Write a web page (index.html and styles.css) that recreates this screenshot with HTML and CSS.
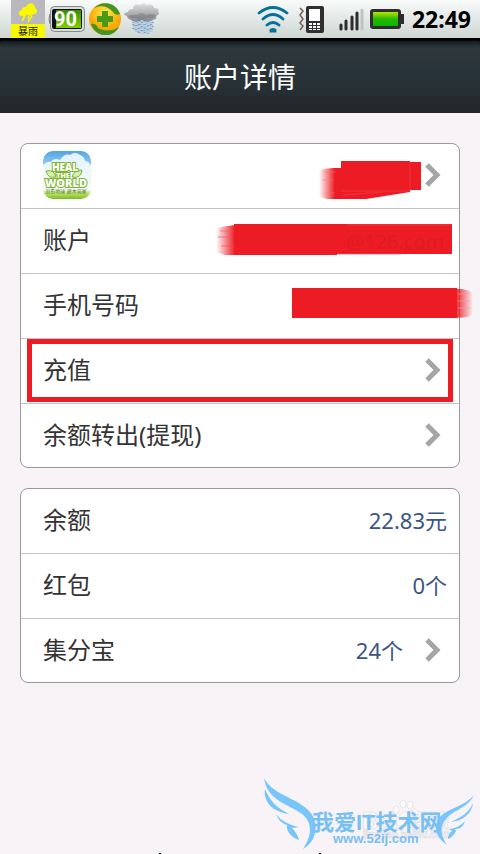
FILE: index.html
```html
<!DOCTYPE html>
<html lang="zh-CN">
<head>
    <meta charset="UTF-8">
    <meta name="viewport" content="width=device-width, initial-scale=1.0">
    <title>账户详情</title>
    <link rel="stylesheet" href="styles.css">
</head>
<body>
    <!-- Status bar -->
    <div class="status-bar">
        <div class="status-left">
            <div class="weather">
                <svg width="34" height="24" viewBox="0 0 34 24">
                    <path fill="#f8f800" d="M11 16c-5 0-4-6 0-6 0-3 2-3 4-3 2-5 9-5 9 1 3 1 3 6-1 6l-3 2-4-1-3 2z"/>
                    <path stroke="#f8f800" stroke-width="1.500" d="M14 16l-3 5M18 16l-1 3M21 16l-4 6"/>
                </svg>
                <span class="weather-text">暴雨</span>
            </div>
            <svg class="battery-level" width="38" height="28" viewBox="0 0 38 28">
                <defs>
                    <linearGradient id="green" x2="0" y2="1">
                        <stop offset="0" stop-color="#3c8a08"/><stop offset="1" stop-color="#80d000"/>
                    </linearGradient>
                </defs>
                <path d="M4 9H2q-2 5 0 10h2" fill="#ddd" stroke="#777"/>
                <rect x="2.500" y="1.500" width="34" height="25" rx="4" fill="#d9dcda" stroke="#858a88"/>
                <rect x="4" y="4" width="30" height="20" rx="2" fill="#111"/>
                <rect x="8" y="5" width="25" height="18" fill="url(#green)"/>
                <text x="6" y="21" class="level-text">90</text>
            </svg>
            <svg width="32" height="32" viewBox="0 0 32 32">
                <defs>
                    <radialGradient id="gold" cy=".3">
                        <stop offset="0" stop-color="#ffe94d"/><stop offset="1" stop-color="#f8a808"/>
                    </radialGradient>
                </defs>
                <circle cx="16" cy="16" r="16" fill="url(#gold)"/>
                <path fill="#429522" d="M5 5C13-3 27-1 31 11q-5 2-7-2C19 3 12 2 5 5zM2 21q5-1 7 4c5 3 13 4 21-1C24 36 7 35 2 21z"/>
                <path fill="#4a9a18" d="M13 8h6v5h5v6h-5v5h-6v-5H8v-6h5z"/>
            </svg>
            <svg width="36" height="34" viewBox="0 0 36 34">
                <defs>
                    <linearGradient id="cloud" x2="0" y2="1">
                        <stop offset="0" stop-color="#dedee2"/><stop offset="1" stop-color="#88888d"/>
                    </linearGradient>
                </defs>
                <path fill="#9bb9d3" opacity=".5" d="M7 17h22v12q-10 6-19 0z"/>
                <path fill="url(#cloud)" d="M3 14q-6-2 1-4 0-3 5-3 0-6 7-4 3-3 7 0 6-2 7 3 6 0 4 4 3 2-2 4 2 4-5 4-4 3-9 0-5 3-10 0-5-1-5-4z"/>
                <path fill="#6a6a70" opacity=".4" d="M4 14q6-2 9-1 5-4 9 0 5-2 10 0-3 4-8 3-8 3-13 0-4 1-7-2z"/>
                <path stroke="#3d84c4" stroke-width="1" stroke-dasharray="1 3" d="M9 18v11M12 19v11M15 18v13M18 20v12M21 18v14M24 19v13M27 18v11M29 20v6"/>
                <path stroke="#6fa3d2" stroke-width="1" stroke-dasharray="1 2" d="M10 20v9M14 20v11M17 19v12M20 19v12M23 18v12M26 20v9"/>
            </svg>
        </div>
        <div class="status-right">
            <svg class="wifi" width="32" height="27" viewBox="0 0 32 27" fill="none" stroke="#087199" stroke-width="2.800" stroke-linecap="round">
                <path d="M2 7Q16-4 30 7M6 13Q16 4 26 13M10 19q6-5 12 0M14 25v-1q2-1 4 0v1z"/>
            </svg>
            <svg class="vibrate" width="25" height="28" viewBox="0 0 25 28">
                <path d="M1 3l3 3-3 4 3 4-3 4 3 3-3 4" fill="none" stroke="#74625d" stroke-width="1.500"/>
                <rect x="7" y="1" width="18" height="27" rx="2" fill="#302e30"/>
                <path fill="#fff" d="M10 4h11v12H10zM10 18h3v2h-3zM14 18h3v2h-3zM18 18h3v2h-3zM10 21h3v2h-3zM14 21h3v2h-3zM18 21h3v2h-3zM10 24h3v1h-3zM14 24h3v1h-3zM18 24h3v1h-3z"/>
            </svg>
            <svg class="signal" width="26" height="23" viewBox="0 0 26 23" stroke-width="3" stroke-linecap="round">
                <path stroke="#302c2e" d="M3 17v4M8 13v8M14 9v12M19 5v16"/>
                <path stroke="#bfc3c1" d="M24 2v19"/>
            </svg>
            <svg width="34" height="20" viewBox="0 0 34 20">
                <defs>
                    <linearGradient id="charge" x2="0" y2="1">
                        <stop offset="0" stop-color="#b4e800"/><stop offset=".5" stop-color="#28b800"/><stop offset="1" stop-color="#05b800"/>
                    </linearGradient>
                </defs>
                <rect width="31" height="20" rx="3" fill="#302d31"/>
                <path fill="#302d31" d="M30 5h4v10h-4z"/>
                <rect x="3" y="3" width="25" height="14" fill="url(#charge)"/>
            </svg>
            <span class="time">22:49</span>
        </div>
    </div>

    <header class="header">
        <h1>账户详情</h1>
    </header>

    <main class="content">
        <!-- Account -->
        <div class="card">
            <a class="row" href="#">
                <svg class="avatar" width="48" height="48" viewBox="0 0 48 48">
                    <defs>
                        <linearGradient id="sky" x2="0" y2="1">
                            <stop offset="0" stop-color="#4fa5e2"/><stop offset=".5" stop-color="#c5e7f8"/><stop offset=".8" stop-color="#eef8d0"/><stop offset=".9" stop-color="#b5df5f"/><stop offset="1" stop-color="#78bb28"/>
                        </linearGradient>
                    </defs>
                    <rect width="48" height="48" rx="10" fill="url(#sky)"/>
                    <path fill="#f4fafd" d="M0 14q4-4 8-3 3-5 9-2 5-7 10-5 5-4 10 0 4 1 5 6 4 0 6 5v25H0z" opacity=".9"/>
                    <path fill="#d8efb2" stroke="#7ab52c" d="M3 20q8-2 10 6-8 2-10-6zM39 19q-8 0-10 7 9 2 10-7z"/>
                    <g class="avatar-text">
                        <text x="22" y="20" font-size="10">HEAL</text>
                        <text x="20" y="27" font-size="7">THE</text>
                        <text x="23" y="36" font-size="11">WORLD</text>
                    </g>
                    <text x="23" y="42" class="avatar-slogan">治愈地球 建木筑家</text>
                </svg>
                <svg class="arrow" width="16" height="24" viewBox="0 0 16 24"><path d="M2 2l10 10L2 22"/></svg>
                <svg class="redact redact-name" width="102" height="40" viewBox="0 0 102 40">
                    <defs>
                        <linearGradient id="fade-left">
                            <stop offset="0" stop-color="#ed1c24" stop-opacity="0"/><stop offset="1" stop-color="#ed1c24"/>
                        </linearGradient>
                        <linearGradient id="fade-right">
                            <stop offset="0" stop-color="#ed1c24"/><stop offset="1" stop-color="#ed1c24" stop-opacity="0"/>
                        </linearGradient>
                    </defs>
                    <path fill="url(#fade-left)" d="M0 11l4-2 10-1h2v31H8l-8-3z"/>
                    <path fill="#ed1c24" d="M15 8h7V1h69v1h11v28H91v2l-44 7H15z"/>
                    <path stroke="#f4747a" stroke-width=".5" d="M5 12h12M3 20h11M6 33h10"/>
                    <path stroke="#f03a42" stroke-width=".8" fill="none" d="M22 31h68M24 35l40-3M91 2v28"/>
                </svg>
            </a>
            <div class="row">
                <span class="label">账户</span>
                <svg class="redact redact-account" width="236" height="32" viewBox="0 0 236 32">
                    <path fill="url(#fade-left)" d="M0 5l5-2 14-2v30H9l-9-3z"/>
                    <path fill="#ed1c24" d="M18 0h218v30H121v1H18z"/>
                    <path stroke="#f25058" stroke-width=".6" d="M131 1h104M4 7h14M2 13h14M5 22h13M121 30h64"/>
                    <text x="130" y="25" class="mail">@126.com</text>
                </svg>
            </div>
            <div class="row">
                <span class="label">手机号码</span>
                <svg class="redact redact-phone" width="181" height="30" viewBox="0 0 181 30">
                    <path fill="#ed1c24" d="M0 0h165v30H0z"/>
                    <path fill="url(#fade-right)" d="M163 1h7l8 2 3 3v19l-5 4-13 1z"/>
                    <path stroke="#f7a0a4" stroke-width=".6" d="M165 6h12M165 13h14M166 20h13"/>
                </svg>
            </div>
            <a class="row row-marked" href="#">
                <span class="label">充值</span>
                <svg class="arrow" width="16" height="24" viewBox="0 0 16 24"><path d="M2 2l10 10L2 22"/></svg>
            </a>
            <a class="row" href="#">
                <span class="label">余额转出(提现)</span>
                <svg class="arrow" width="16" height="24" viewBox="0 0 16 24"><path d="M2 2l10 10L2 22"/></svg>
            </a>
        </div>

        <!-- Balance -->
        <div class="card">
            <div class="row">
                <span class="label">余额</span>
                <span class="value">22.83元</span>
            </div>
            <div class="row">
                <span class="label">红包</span>
                <span class="value">0个</span>
            </div>
            <a class="row" href="#">
                <span class="label">集分宝</span>
                <span class="value">24个</span>
                <svg class="arrow" width="16" height="24" viewBox="0 0 16 24"><path d="M2 2l10 10L2 22"/></svg>
            </a>
        </div>
    </main>

    <footer class="footer">
        <svg class="logo" width="230" height="84" viewBox="0 0 230 84">
            <g class="baidu">
                <text x="112" y="59" font-size="23">Bai</text>
                <text x="157" y="59" font-size="21">经验</text>
                <text x="113" y="68" font-size="10">jingyan.baidu.com</text>
                <ellipse cx="146" cy="40" rx="3" ry="4"/>
                <ellipse cx="153" cy="34" rx="3" ry="4"/>
                <ellipse cx="160" cy="35" rx="3" ry="4"/>
                <ellipse cx="165" cy="43" rx="3" ry="4"/>
                <path d="M155 42q4 0 6 6 4 7-1 8-5-1-10 0-6-1-2-7 3-7 7-7z"/>
            </g>
            <g class="wings">
                <path d="M14 8C22 24 44 27 57 39 70 50 68 71 53 79 63 64 62 52 52 44 39 34 17 31 14 8z"/>
                <path d="M15 19C20 32 28 38 39 44 23 42 13 32 15 19z"/>
                <path d="M26 44C32 52 40 55 49 57L42 58Q47 63 49 70C40 67 36 60 37 55 31 53 28 49 26 44z"/>
                <path d="M224 25C218 38 203 40 196 49 189 57 191 66 197 75 185 67 183 56 190 47 198 38 214 37 224 25z"/>
                <path d="M223 33C222 44 212 51 201 52 211 47 219 43 223 33z"/>
                <path d="M215 51C213 58 209 59 205 59L206 61Q203 67 198 69 198 64 202 61L199 59Q209 58 215 51z"/>
            </g>
            <text x="62" y="60" class="logo-name">我爱IT技术网</text>
            <text x="83" y="73" class="logo-url">www.52ij.com</text>
        </svg>
        <div class="ticks">
            <span class="tick"></span>
            <span class="tick"></span>
        </div>
    </footer>
</body>
</html>
```

FILE: styles.css
```css
* {
    box-sizing: border-box;
}
body {
    margin: 0;
    min-height: 100vh;
    display: flex;
    flex-direction: column;
    background: #f7f3f7;
    color: #333;
    font-family: "Noto Sans", "Noto Sans CJK SC", sans-serif;
}
svg {
    display: block;
    flex-shrink: 0;
}

/* Status bar */
.status-bar {
    display: flex;
    justify-content: space-between;
    height: 38px;
    padding: 0 9px 0 11px;
    background: linear-gradient(#f8fbfa, #ced6d2);
}
.status-left, .status-right {
    display: flex;
    align-items: center;
}
.status-left {
    gap: 3px;
}
.weather {
    width: 34px;
    height: 38px;
    background: #b8b8be;
}
.weather-text {
    display: block;
    height: 14px;
    line-height: 14px;
    font-size: 10px;
    text-align: center;
    color: #222;
    background: #f8f800;
}
.level-text {
    font: bold 20px Roboto, sans-serif;
    fill: #fff;
}
.wifi {
    margin-right: 10px;
}
.vibrate {
    margin-right: 14px;
}
.signal {
    margin-right: 6px;
}
.time {
    margin-left: 8px;
    font-size: 23px;
    font-weight: bold;
    line-height: 38px;
    color: #000;
}

/* Title bar */
.header {
    background: #000;
}
.header h1 {
    margin: 0;
    height: 75px;
    line-height: 76px;
    font-size: 28px;
    font-weight: normal;
    font-family: "Noto Sans CJK SC", sans-serif;
    text-align: center;
    color: #fff;
    border-radius: 5px 5px 0 0;
    background: linear-gradient(#000 0, #000 2px, #182225 4px, #2d373c 10px, #29343a 36px, #21272a 75px);
}

/* Cards */
.content {
    display: flex;
    flex-direction: column;
    gap: 20px;
    padding: 30px 20px;
}
.card {
    border: 1px solid #999;
    border-radius: 8px;
    background: #fff;
}
.row {
    position: relative;
    display: flex;
    align-items: center;
    min-height: 65px;
    padding: 0 12px 2px 22px;
    border-bottom: 1px solid #c4c4c4;
    color: #333;
    text-decoration: none;
}
.row:last-child {
    min-height: 63px;
    border-bottom: none;
}
.label {
    flex: 1;
    font-size: 24px;
    line-height: 32px;
}
.value {
    font-size: 22px;
    line-height: 32px;
    color: #3b5584;
}
.arrow {
    margin-left: 22px;
    margin-right: 6px;
    fill: none;
    stroke: #a5a5a5;
    stroke-width: 5;
}
.avatar {
    margin-right: auto;
}
.avatar-text {
    font-family: "Noto Sans", sans-serif;
    font-weight: 900;
    text-anchor: middle;
    fill: #fff;
    stroke: #7ab52c;
    stroke-width: 2;
    paint-order: stroke;
}
.avatar-slogan {
    font-size: 5px;
    text-anchor: middle;
    fill: #527b21;
}

/* Red marks over the rows */
.row-marked::after {
    content: "";
    position: absolute;
    inset: 0 6px 1px;
    border: 5px solid #ed1c24;
}
.redact {
    position: absolute;
}
.redact-name {
    top: 16px;
    right: 38px;
}
.redact-account {
    top: 15px;
    right: 7px;
}
.redact-phone {
    top: 14px;
    right: -14px;
}
.mail {
    font-size: 20px;
    fill: #dc1b23;
}

/* Footer */
.footer {
    position: relative;
    margin-top: auto;
}
.logo {
    margin-left: auto;
}
.wings {
    fill: #77c5fb;
}
.logo-name {
    font: bold 22px "Liberation Sans", "Noto Sans CJK SC", sans-serif;
    fill: #77c0f5;
}
.logo-url {
    font: bold 13px "Liberation Sans", sans-serif;
    fill: #77c0f5;
}
.baidu {
    font-family: "Liberation Sans", "Noto Sans CJK SC", sans-serif;
    font-weight: bold;
    fill: #fbf9fb;
    stroke: #dedade;
    stroke-width: .6;
}
.ticks {
    position: absolute;
    left: 0;
    right: 0;
    bottom: 0;
    display: flex;
    justify-content: space-evenly;
}
.tick {
    width: 2px;
    height: 1px;
    background: #111;
}
```
